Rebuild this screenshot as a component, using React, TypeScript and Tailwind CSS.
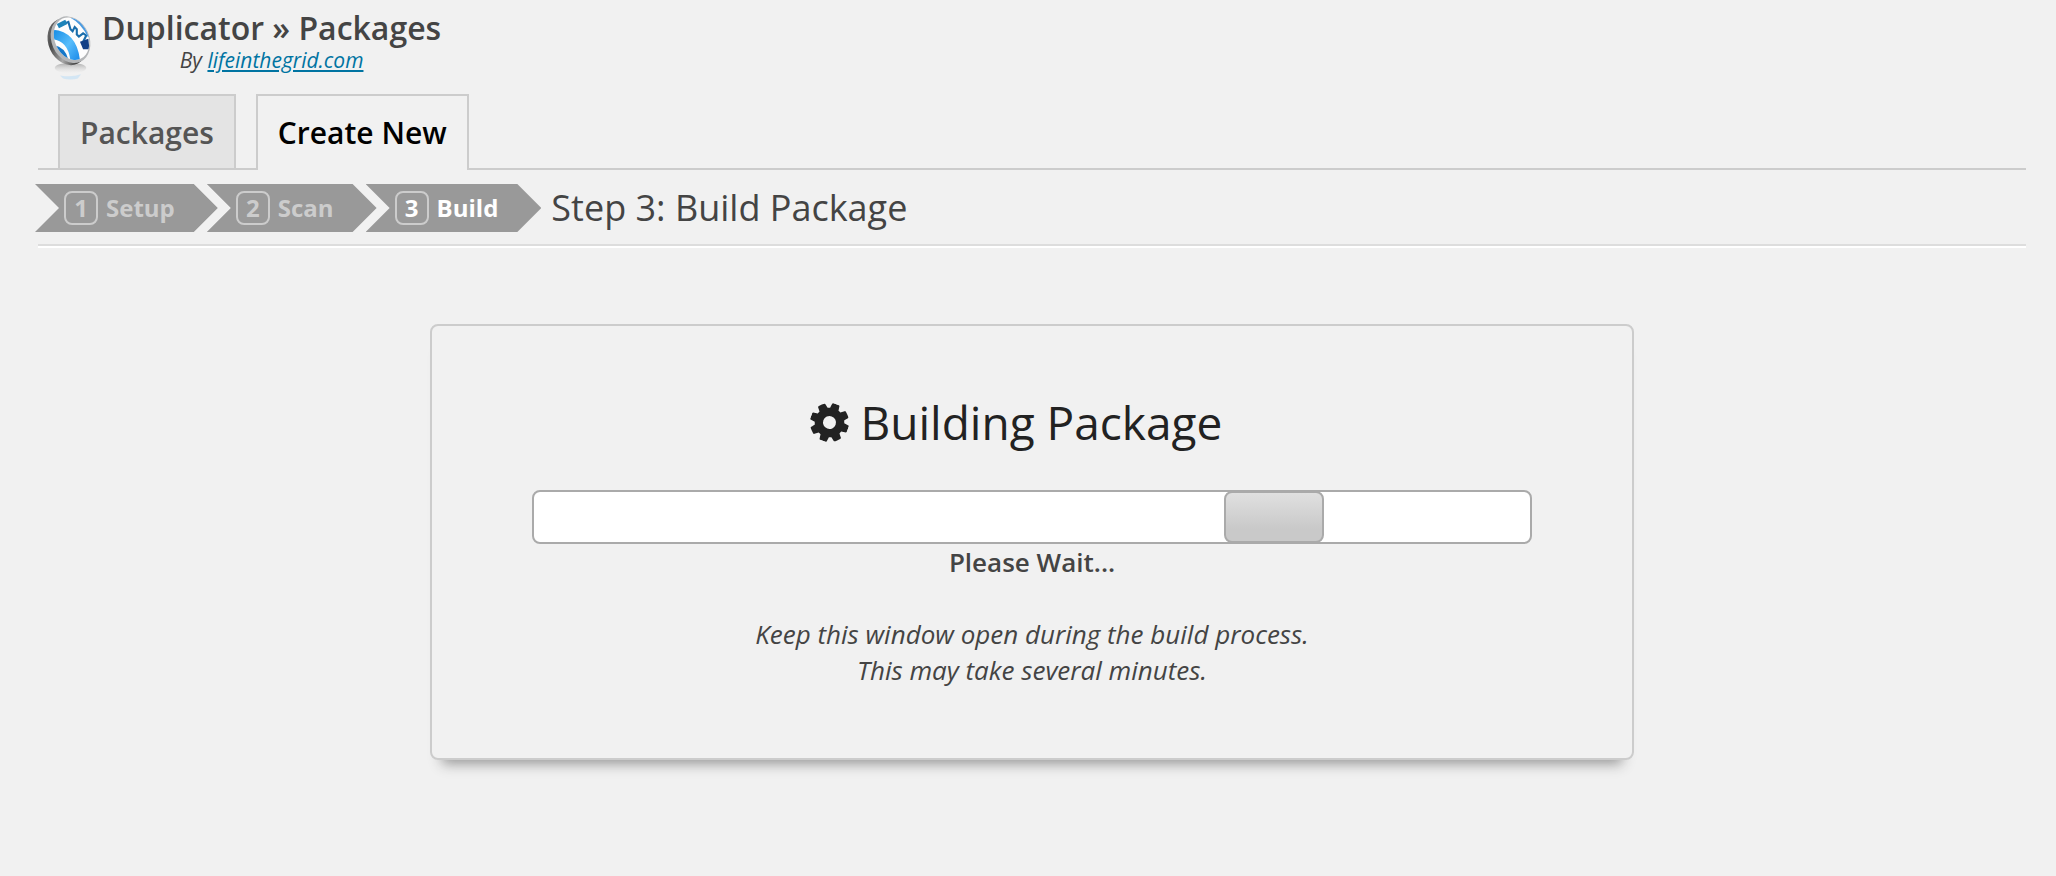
import { useState } from "react";

const tabs = ["Packages", "Create New"];
const steps = ["Setup", "Scan", "Build"];

function Logo() {
  return (
    <svg viewBox="0 0 60 80" className="w-[60px] h-[80px]" aria-hidden="true">
      <defs>
        <linearGradient id="rim" x1="0" y1="0" x2="1" y2="1">
          <stop offset="0" stopColor="#8d8d8d" />
          <stop offset="0.25" stopColor="#4b4b4b" />
          <stop offset="0.5" stopColor="#a8a8a8" />
          <stop offset="0.75" stopColor="#3c3c3c" />
          <stop offset="1" stopColor="#9a9a9a" />
        </linearGradient>
        <linearGradient id="arc" x1="0" y1="0" x2="1" y2="1">
          <stop offset="0" stopColor="#1a8fe6" />
          <stop offset="0.5" stopColor="#58bdfb" />
          <stop offset="1" stopColor="#1787e8" />
        </linearGradient>
        <linearGradient id="shade" x1="0" y1="0" x2="0" y2="1">
          <stop offset="0" stopColor="#8a8a8a" stopOpacity="0.7" />
          <stop offset="1" stopColor="#d8d8d8" stopOpacity="0" />
        </linearGradient>
        <clipPath id="face">
          <ellipse cx="31" cy="33" rx="16" ry="21" transform="rotate(-24 31 33)" />
        </clipPath>
      </defs>
      <g transform="translate(1 0) scale(1.05)">
        <ellipse cx="30" cy="61" rx="15" ry="5" fill="url(#shade)" />
        <path d="M20 68q11 2 20-1l-3 4q-7 2-14 0z" fill="#b5dcf7" opacity="0.5" />
        <ellipse cx="27" cy="36" rx="18" ry="23" transform="rotate(-24 27 36)" fill="url(#rim)" />
        <ellipse cx="30" cy="34" rx="18" ry="23" transform="rotate(-24 30 34)" fill="#b4b6b8" />
        <ellipse cx="31" cy="33" rx="16" ry="21" transform="rotate(-24 31 33)" fill="#fdfdfd" />
        <g clipPath="url(#face)">
          <path d="M12 29Q34 30 35 60" fill="none" stroke="url(#arc)" strokeWidth="9" />
          <path d="M14 39Q25 41 28 53L18 53z" fill="#1477c9" />
          <path d="M19 21L28 17L30 24L32 26L34 22L36 24L36 29L38 31L42 28L45 30L42 36L46 40" fill="none" stroke="#1a6eac" strokeWidth="2" />
          <path d="M31 12Q41 17 48 31" fill="none" stroke="#4c9be0" strokeWidth="3" />
          <path d="M17 19L25 15L27 19L19 23z" fill="#1d83b9" />
          <path d="M39 36L47 33L48 43L42 43z" fill="#123f86" />
        </g>
      </g>
    </svg>
  );
}

function Gear() {
  return (
    <svg viewBox="128 128 1536 1536" className="w-[39px] h-[39px] rotate-[20deg]" fill="currentColor" aria-hidden="true">
      <path d="M1152 896q0-106-75-181t-181-75-181 75-75 181 75 181 181 75 181-75 75-181zm512-109v222q0 12-8 23t-20 13l-185 28q-19 54-39 91 35 50 107 138 10 12 10 25t-9 23q-27 37-99 108t-94 71q-12 0-26-9l-138-108q-44 23-91 38-16 136-29 186-7 28-36 28h-222q-14 0-24.500-8.500t-11.500-21.500l-28-184q-49-16-90-37l-141 107q-10 9-25 9-14 0-25-11-126-114-165-168-7-10-7-23 0-12 8-23 15-21 51-66.500t54-70.500q-27-50-41-99l-183-27q-13-2-21-12.500t-8-23.500v-222q0-12 8-23t19-13l186-28q14-46 39-92-40-57-107-138-10-12-10-24 0-10 9-23 26-36 98.500-107.500t94.500-71.500q13 0 26 10l138 107q44-23 91-38 16-136 29-186 7-28 36-28h222q14 0 24.500 8.500t11.500 21.500l28 184q49 16 90 37l142-107q9-9 24-9 13 0 25 10 129 119 165 170 7 8 7 22 0 12-8 23-15 21-51 66.500t-54 70.500q26 50 41 98l183 28q13 2 21 12.500t8 23.500z" />
    </svg>
  );
}

export default function App() {

  const [activeTab, setActiveTab] = useState("Create New");
  const [offset] = useState(69.3);
  const currentStep = 3;

  return (
    <main className="min-h-screen bg-[#f1f1f1] text-[#444] font-['Open_Sans',sans-serif] pl-[38px] pr-[30px] pt-1">

      <header className="flex items-start gap-1">
        <Logo />
        <div className="text-center">
          <h1 className="text-[32px] leading-[48px] font-semibold">
            Duplicator » Packages
          </h1>
          <p className="text-[21px] leading-4 italic">
            By{" "}
            <a href="#author" className="text-[#0074a2] underline">
              lifeinthegrid.com
            </a>
          </p>
        </div>
      </header>

      <nav className="flex gap-5 px-5 mt-[10px] border-b-2 border-[#ccc]">
        {tabs.map((tab) => (
          <a
            key={tab}
            href="#tab"
            onClick={() => setActiveTab(tab)}
            className={`px-5 pt-4 pb-[14px] text-[30px] leading-[42px] font-semibold border-2 border-b-0 border-[#ccc] ${
              activeTab === tab
                ? "bg-[#f1f1f1] text-black -mb-[2px] pb-4"
                : "bg-[#e4e4e4] text-[#555]"
            }`}
          >
            {tab}
          </a>
        ))}
      </nav>

      <div className="flex items-center gap-[10px] pt-[14px] pb-3 -ml-[3px]">
        <ol className="flex">
          {steps.map((step, i) => (
            <li
              key={step}
              className={`flex items-center gap-2 h-12 pl-[29px] pr-[43px] -mr-[11px] last:mr-0 bg-[#999] text-2xl font-bold [clip-path:polygon(0_0,calc(100%_-_24px)_0,100%_50%,calc(100%_-_24px)_100%,0_100%,24px_50%)] ${
                i + 1 === currentStep ? "text-white" : "text-[#ccc]"
              }`}
            >
              <span className="flex items-center justify-center w-[34px] h-[34px] border-2 border-[#ccc] rounded-lg">
                {i + 1}
              </span>
              {step}
            </li>
          ))}
        </ol>
        <h2 className="text-[36px] leading-[44px]">
          Step 3: Build Package
        </h2>
      </div>

      <div className="h-1 bg-white border-t-2 border-[#ddd]" />

      <section className="max-w-[1204px] mx-auto mt-[76px] px-[100px] pt-16 pb-[70px] border-2 border-[#ccc] rounded-lg shadow-[0_16px_12px_-12px_#999] text-center">

        <h2 className="flex items-center justify-center gap-3 pr-8 text-[46px] leading-[64px] text-[#222]">
          <Gear />
          Building Package
        </h2>

        <div
          role="progressbar"
          aria-label="Building package"
          className="h-[54px] mt-9 bg-white border-2 border-[#aaa] rounded-lg"
        >
          <div
            style={{ marginLeft: `${offset}%` }}
            className="w-[10%] h-[52px] -mt-px border-2 border-[#aaa] rounded-lg bg-linear-to-b from-[#e0e0e0] to-[#c9c9c9] to-75%"
          />
        </div>

        <p className="text-[26px] leading-9 font-semibold">
          Please Wait...
        </p>

        <p className="mt-9 text-[26px] leading-9 italic">
          Keep this window open during the build process.
          <br />
          This may take several minutes.
        </p>

      </section>

    </main>
  );
}
